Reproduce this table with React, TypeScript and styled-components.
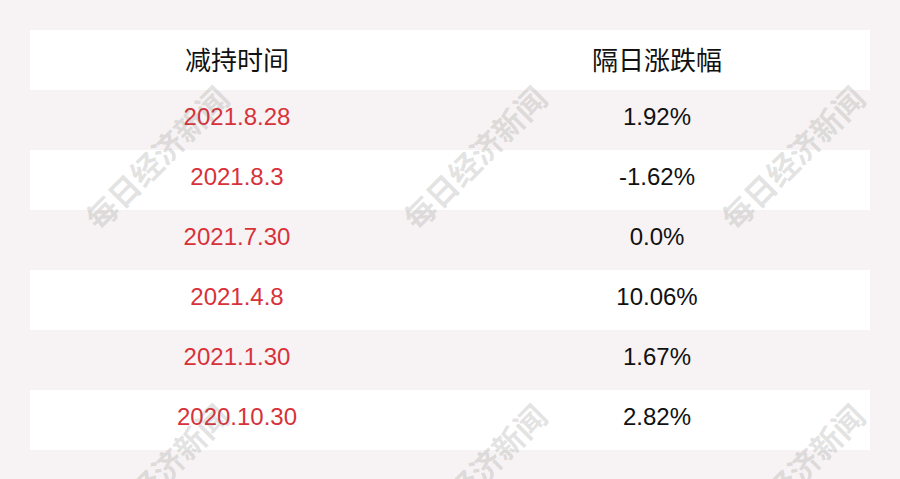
import React from 'react';
import styled, { createGlobalStyle } from 'styled-components';

const rows = [
  { date: '2021.8.28', change: '1.92%' },
  { date: '2021.8.3', change: '-1.62%' },
  { date: '2021.7.30', change: '0.0%' },
  { date: '2021.4.8', change: '10.06%' },
  { date: '2021.1.30', change: '1.67%' },
  { date: '2020.10.30', change: '2.82%' },
];

const marks = [
  { x: 156, y: 157 },
  { x: 474, y: 157 },
  { x: 792, y: 157 },
  { x: 156, y: 475 },
  { x: 474, y: 475 },
  { x: 792, y: 475 },
];

function App() {
  return (
    <Page>
      <GlobalStyle />
      <Table>
        <Row $white>
          <HeadCell>减持时间</HeadCell>
          <HeadCell>隔日涨跌幅</HeadCell>
        </Row>
        {rows.map((r, i) => (
          <Row key={r.date} $white={i % 2 === 1}>
            <DateCell>{r.date}</DateCell>
            <ValueCell>{r.change}</ValueCell>
          </Row>
        ))}
      </Table>
      {marks.map((m, i) => (
        <Watermark key={i} style={{ left: m.x, top: m.y }}>
          每日经济新闻
        </Watermark>
      ))}
    </Page>
  );
}

const GlobalStyle = createGlobalStyle`
  html, body {
    margin: 0;
    padding: 0;
    background: #f7f3f4;
  }
`;

const Page = styled.div`
  position: relative;
  width: 900px;
  height: 479px;
  overflow: hidden;
  padding: 30px;
  box-sizing: border-box;
  background: #f7f3f4;
  font-family: "Liberation Sans", Arial, "Noto Sans CJK SC", sans-serif;
`;

const Table = styled.div`
  display: flex;
  flex-direction: column;
  width: 840px;
`;

const Row = styled.div<{ $white?: boolean }>`
  display: grid;
  grid-template-columns: 414px 426px;
  height: 60px;
  align-items: center;
  background: ${(p) => (p.$white ? '#ffffff' : 'transparent')};
`;

const Cell = styled.div`
  text-align: center;
  line-height: 1;
  padding-bottom: 6px;
`;

const HeadCell = styled(Cell)`
  font-family: "Noto Sans CJK SC", "Liberation Sans", sans-serif;
  font-size: 26px;
  font-weight: 400;
  color: #111;
  padding-bottom: 2px;
`;

const DateCell = styled(Cell)`
  font-size: 24px;
  color: #d7323a;
`;

const ValueCell = styled(Cell)`
  font-size: 24px;
  color: #111;
`;

const Watermark = styled.div`
  position: absolute;
  transform: translate(-50%, -50%) rotate(-45deg);
  white-space: nowrap;
  font-family: "Noto Sans CJK SC", sans-serif;
  font-weight: 700;
  font-size: 31px;
  line-height: 1;
  color: rgba(110, 110, 110, 0.2);
  pointer-events: none;
`;

export default App;
